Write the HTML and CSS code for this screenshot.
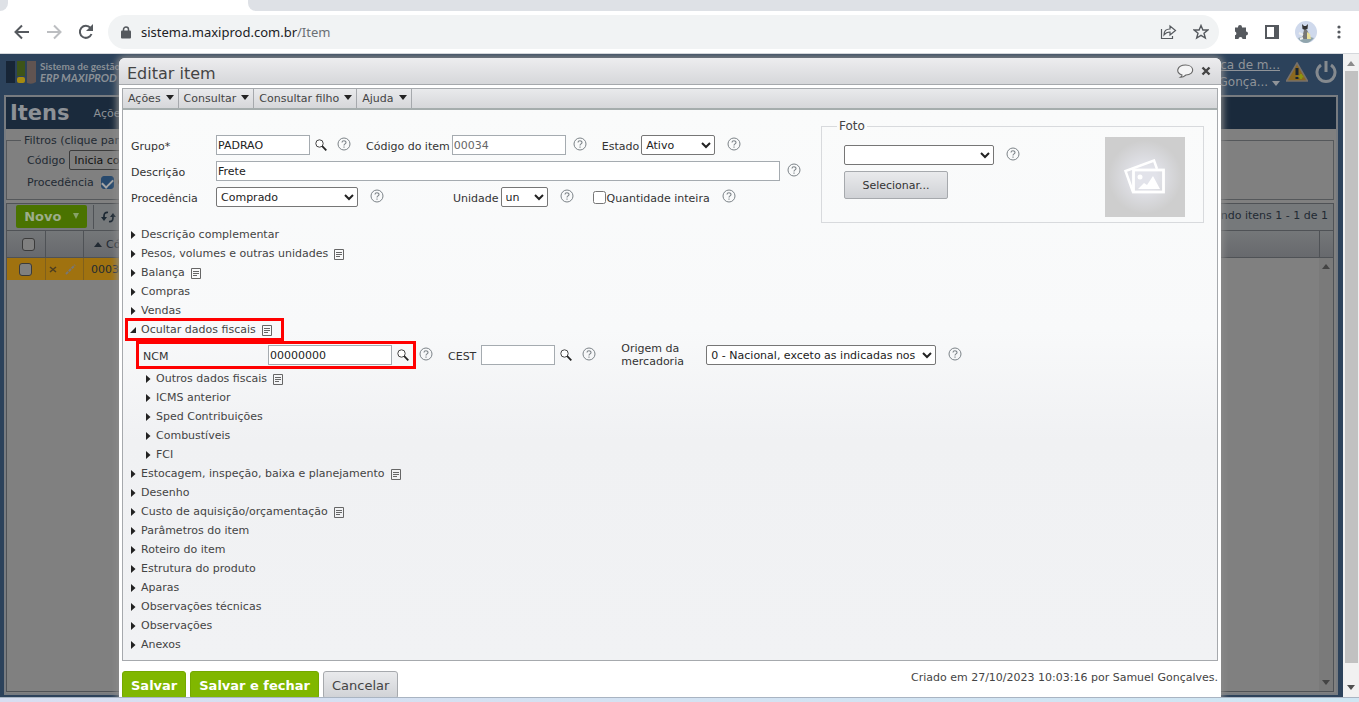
FILE: index.html
```html
<!DOCTYPE html>
<html lang="pt-br">

<head>
  <meta charset="UTF-8" />
  <meta name="viewport" content="width=device-width, initial-scale=1.0" />
  <title>Itens - ERP MAXIPROD</title>
  <link rel="stylesheet" href="styles.css">
</head>

<body>

  <!-- Ícones reutilizados -->
  <svg class="sprite" aria-hidden="true">
    <symbol id="i-help" viewBox="0 0 14 14">
      <circle cx="7" cy="7" r="6" fill="none" stroke="#7c8388" />
      <path d="M5 5.6C5 3.200 9 3.200 9 5.500C9 6.900 7 6.900 7 8.400M7 9.600V10.700" fill="none" stroke="#7c8388" stroke-width="1.100" />
    </symbol>
    <symbol id="i-search" viewBox="0 0 12 12">
      <circle cx="4.500" cy="4.500" r="3.700" fill="#fff" stroke="#444" />
      <path d="M7.200 7.200L11.300 11.300" stroke="#222" stroke-width="1.800" />
    </symbol>
    <symbol id="i-note" viewBox="0 0 10 11">
      <path d="M1 .5H9.500V10.500H.5V.5H1M2 3.500H8M2 5.500H8M2 7.500H6" fill="none" stroke="#666" />
    </symbol>
    <symbol id="i-right" viewBox="0 0 5 8">
      <path d="M0 0L4.500 4L0 8Z" fill="#222" />
    </symbol>
    <symbol id="i-open" viewBox="0 0 6 6">
      <path d="M6 0V6H0Z" fill="#222" />
    </symbol>
    <symbol id="i-down" viewBox="0 0 8 5">
      <path d="M0 0H8L4 5Z" fill="currentColor" />
    </symbol>
    <symbol id="i-up" viewBox="0 0 8 5">
      <path d="M0 5H8L4 0Z" fill="currentColor" />
    </symbol>
  </svg>

  <!-- Navegador -->
  <div class="tabs">
    <div class="tab-prev"></div>
    <div class="tab-active"></div>
    <div class="tab-next"></div>
  </div>
  <div class="browser-bar">
    <button class="nav" aria-label="Voltar">
      <svg width="16" height="16" viewBox="0 0 16 16"><path d="M15 8H2M8 1.500L1.500 8L8 14.500" fill="none" stroke="#55595e" stroke-width="2" /></svg>
    </button>
    <button class="nav" aria-label="Avançar">
      <svg width="16" height="16" viewBox="0 0 16 16"><path d="M1 8H14M8 1.500L14.500 8L8 14.500" fill="none" stroke="#bcbec1" stroke-width="2" /></svg>
    </button>
    <button class="nav" aria-label="Recarregar">
      <svg width="16" height="16" viewBox="0 0 16 16"><path d="M13.500 10A6 6 0 1 1 12.500 4" fill="none" stroke="#55595e" stroke-width="2" /><path d="M15 0V7H8Z" fill="#55595e" /></svg>
    </button>
    <div class="address">
      <svg width="10" height="13" viewBox="0 0 10 13"><path d="M2.500 5V3.500A2.500 2.500 0 0 1 7.500 3.500V5" fill="none" stroke="#55595e" stroke-width="1.500" /><rect x="0" y="4.500" width="10" height="8" rx="1" fill="#55595e" /></svg>
      <span class="url">sistema.maxiprod.com.br<span class="path">/Item</span></span>
      <svg width="17" height="16" viewBox="0 0 17 16"><path d="M1.500 5V14.500H12.500V12M4 11C4 7 6 5 10 5V2L15.500 6.500L10 11V8C7 8 5.500 9 4 11Z" fill="none" stroke="#55595e" stroke-width="1.200" /></svg>
      <svg width="16" height="16" viewBox="0 0 16 16"><path d="M8 1.500L9.900 6H14.800L11 9.200L12.300 14L8 11.300L3.700 14L5 9.200L1.200 6H6.100Z" fill="none" stroke="#55595e" stroke-width="1.400" /></svg>
    </div>
    <div class="extensions">
      <svg width="16" height="16" viewBox="0 0 16 16"><path d="M2 3.500H5V3A2 2 0 0 1 9 3V3.500H13V7.500A2 2 0 0 1 13 11.500V15H9.500A2 2 0 0 0 5.500 15H2V11.300A2 2 0 0 0 2 7.500Z" fill="#55595e" /></svg>
      <svg width="14" height="14" viewBox="0 0 14 14"><path d="M1 1H13V13H1Z" fill="none" stroke="#55595e" stroke-width="2" /><path d="M9 1H13V13H9Z" fill="#55595e" /></svg>
      <svg width="22" height="22" viewBox="0 0 22 22"><circle cx="11" cy="11" r="11" fill="#cfd9ec" /><path d="M3 17Q11 14 19 17Q15 22 11 22Q6 22 3 17Z" fill="#90a5ad" /><path d="M7 3L9 5H11L13 3L12.500 8L10 9L7.500 8Z" fill="#333" /><path d="M9 9H12L14 13L13 18H7L8 13Z" fill="#777" /><path d="M12 11L15 13L16 18H12Z" fill="#eadf99" /><path d="M8 14L4 12M8 17L5 18" stroke="#eee" stroke-width="2" /></svg>
      <svg width="4" height="16" viewBox="0 0 4 16"><circle cx="2" cy="3" r="1.600" fill="#55595e" /><circle cx="2" cy="8" r="1.600" fill="#55595e" /><circle cx="2" cy="13" r="1.600" fill="#55595e" /></svg>
    </div>
  </div>

  <div class="viewport">
    <div class="page">

      <!-- Tela de itens, atrás do diálogo -->
      <header class="app-header">
        <svg width="30" height="24" viewBox="0 0 30 24"><rect width="9" height="22" y="1" fill="#172536" /><rect x="11" y="1" width="8" height="15" fill="#3d5418" /><rect x="11" y="17" width="8" height="6" rx="2" fill="#a58a10" /><path d="M21 1H30V22Q26 25 21 23Z" fill="#615451" /></svg>
        <div class="brand">
          <span>Sistema de gestão</span>
          <em>ERP MAXIPROD</em>
        </div>
        <div class="account">
          <a href="#">Fábrica de m...</a>
          <span>Samuel Gonça... <svg width="8" height="5"><use href="#i-down" /></svg></span>
        </div>
        <svg width="22" height="20" viewBox="0 0 22 20"><path d="M11 1L21.500 19H.5Z" fill="#8b681f" stroke="#77706b" stroke-width="1.500" /><path d="M11 6V13M11 15V17" stroke="#192431" stroke-width="3" /><path d="M15 12V17M12.500 14.500H17.500" stroke="#8b9410" stroke-width="2" /></svg>
        <svg width="22" height="24" viewBox="0 0 22 24"><path d="M6 5A9 9 0 1 0 16 5M11 1V12" fill="none" stroke="#858a8f" stroke-width="3" /></svg>
      </header>

      <main class="frame">
        <div class="title-bar">
          <h1>Itens</h1>
          <span>Ações</span>
        </div>
        <fieldset class="filters">
          <legend>Filtros (clique para)</legend>
          <div class="filter-row">
            <label for="f-codigo">Código</label>
            <select id="f-codigo"><option>Inicia com</option></select>
          </div>
          <div class="filter-row">
            <span>Procedência</span>
            <input type="checkbox" class="dim-check on" id="f-comprado" checked>
            <label for="f-comprado">C</label>
          </div>
        </fieldset>
        <section class="list">
          <div class="list-bar">
            <button class="novo">Novo <svg width="6" height="6" viewBox="0 0 8 5" preserveAspectRatio="none"><path d="M0 0H8L4 5Z" fill="#87a267" /></svg></button>
            <span class="list-tools">
              <svg width="15" height="12" viewBox="0 0 15 12"><path d="M7 1.500Q3 1 3 5V7M8 10.500Q12 11 12 7V5" fill="none" stroke="#1c2833" stroke-width="1.700" /><path d="M0 6H6L3 10ZM9 6H15L12 2Z" fill="#1c2833" /></svg>
            </span>
            <span class="count">Exibindo itens 1 - 1 de 1</span>
          </div>
          <div class="list-head">
            <span class="c-check"><input type="checkbox" class="dim-check" aria-label="Selecionar todos"></span>
            <span class="c-tools"></span>
            <span class="c-code"><svg width="8" height="5"><use href="#i-up" /></svg> Código</span>
            <span class="c-end"></span>
          </div>
          <div class="list-body">
            <div class="list-row">
              <span class="c-check"><input type="checkbox" class="dim-check" aria-label="Selecionar 00034"></span>
              <span class="c-tools">
                <svg width="8" height="8" viewBox="0 0 8 8"><path d="M1 2L7 7M1 7L7 2" stroke="#4d3e20" stroke-width="1.500" /></svg>
                <svg width="11" height="11" viewBox="0 0 11 11"><path d="M1 10L10 1" stroke="#777" stroke-width="2" stroke-dasharray="3 1" /></svg>
              </span>
              <span class="c-code">00034</span>
            </div>
            <div class="list-scroll">
              <svg width="8" height="5"><use href="#i-up" /></svg>
              <svg width="8" height="5"><use href="#i-down" /></svg>
            </div>
          </div>
        </section>
      </main>

      <!-- Diálogo de edição -->
      <div class="dialog" role="dialog" aria-labelledby="dialog-title">
        <div class="dialog-head">
          <h2 id="dialog-title">Editar item</h2>
          <button class="icon-btn" aria-label="Comentários">
            <svg width="17" height="14" viewBox="0 0 17 14"><path d="M5 11C-2 9 0 1 8.500 1C18 1 18 11 9 11Q6 13.500 3.500 13.300Q5 12.500 5 11Z" fill="#f4f4f5" stroke="#666" stroke-width="1.100" /></svg>
          </button>
          <button class="icon-btn" aria-label="Fechar">
            <svg width="10" height="10" viewBox="0 0 10 10"><path d="M1.500 1.500L8.500 8.500M8.500 1.500L1.500 8.500" stroke="#444" stroke-width="2.400" /></svg>
          </button>
        </div>

        <nav class="menu">
          <button>Ações <svg width="8" height="5"><use href="#i-down" /></svg></button>
          <button>Consultar <svg width="8" height="5"><use href="#i-down" /></svg></button>
          <button>Consultar filho <svg width="8" height="5"><use href="#i-down" /></svg></button>
          <button>Ajuda <svg width="8" height="5"><use href="#i-down" /></svg></button>
        </nav>

        <div class="panel">
          <div class="top">
            <div class="fields">
              <div class="row">
                <label class="first" for="grupo">Grupo*</label>
                <input type="text" id="grupo" class="w-grupo" value="PADRAO">
                <svg class="search"><use href="#i-search" /></svg>
                <svg class="help"><use href="#i-help" /></svg>
                <label for="codigo">Código do item</label>
                <input type="text" id="codigo" class="w-codigo" value="00034">
                <svg class="help after-input"><use href="#i-help" /></svg>
                <label for="estado">Estado</label>
                <select id="estado" class="w-estado"><option>Ativo</option></select>
                <svg class="help"><use href="#i-help" /></svg>
              </div>
              <div class="row">
                <label class="first" for="descricao">Descrição</label>
                <input type="text" id="descricao" class="w-descricao" value="Frete">
                <svg class="help after-input"><use href="#i-help" /></svg>
              </div>
              <div class="row">
                <label class="first" for="procedencia">Procedência</label>
                <select id="procedencia" class="w-procedencia"><option>Comprado</option></select>
                <svg class="help"><use href="#i-help" /></svg>
                <label class="unidade" for="unidade">Unidade</label>
                <select id="unidade" class="w-unidade"><option>un</option></select>
                <svg class="help"><use href="#i-help" /></svg>
                <input type="checkbox" id="inteira">
                <label class="check-label" for="inteira">Quantidade inteira</label>
                <svg class="help"><use href="#i-help" /></svg>
              </div>
            </div>

            <fieldset class="foto">
              <legend>Foto</legend>
              <div class="foto-body">
                <div class="foto-form">
                  <div class="foto-line">
                    <select class="w-foto" aria-label="Foto"><option></option></select>
                    <svg class="help"><use href="#i-help" /></svg>
                  </div>
                  <button class="btn-grey">Selecionar...</button>
                </div>
                <div class="thumb">
                  <svg width="42" height="36" viewBox="0 0 42 36"><path d="M9 33L1.500 12L30 1.500L33 10" fill="none" stroke="#fff" stroke-width="2.500" /><rect x="9.500" y="11" width="30" height="22" fill="none" stroke="#fff" stroke-width="2.800" /><circle cx="16" cy="18" r="2.500" fill="#fff" /><path d="M14 30L20 24L23 26L29 17L36 30Z" fill="#fff" /></svg>
                </div>
              </div>
            </fieldset>
          </div>

          <ul class="tree">
            <li><a href="#"><svg class="arrow"><use href="#i-right" /></svg>Descrição complementar</a></li>
            <li><a href="#"><svg class="arrow"><use href="#i-right" /></svg>Pesos, volumes e outras unidades<svg class="note"><use href="#i-note" /></svg></a></li>
            <li><a href="#"><svg class="arrow"><use href="#i-right" /></svg>Balança<svg class="note"><use href="#i-note" /></svg></a></li>
            <li><a href="#"><svg class="arrow"><use href="#i-right" /></svg>Compras</a></li>
            <li><a href="#"><svg class="arrow"><use href="#i-right" /></svg>Vendas</a></li>
            <li>
              <a href="#" class="marked"><svg class="arrow open"><use href="#i-open" /></svg>Ocultar dados fiscais<svg class="note"><use href="#i-note" /></svg></a>
              <div class="fiscal">
                <div class="ncm">
                  <label for="ncm">NCM</label>
                  <input type="text" id="ncm" class="w-ncm" value="00000000">
                  <svg class="search"><use href="#i-search" /></svg>
                </div>
                <svg class="help"><use href="#i-help" /></svg>
                <label for="cest">CEST</label>
                <input type="text" id="cest" class="w-cest">
                <svg class="search"><use href="#i-search" /></svg>
                <svg class="help"><use href="#i-help" /></svg>
                <label class="origem" for="origem">Origem da mercadoria</label>
                <select id="origem" class="w-origem"><option>0 - Nacional, exceto as indicadas nos códigos 3, 4, 5 e 8</option></select>
                <svg class="help"><use href="#i-help" /></svg>
              </div>
              <ul class="sub">
                <li><a href="#"><svg class="arrow"><use href="#i-right" /></svg>Outros dados fiscais<svg class="note"><use href="#i-note" /></svg></a></li>
                <li><a href="#"><svg class="arrow"><use href="#i-right" /></svg>ICMS anterior</a></li>
                <li><a href="#"><svg class="arrow"><use href="#i-right" /></svg>Sped Contribuições</a></li>
                <li><a href="#"><svg class="arrow"><use href="#i-right" /></svg>Combustíveis</a></li>
                <li><a href="#"><svg class="arrow"><use href="#i-right" /></svg>FCI</a></li>
              </ul>
            </li>
            <li><a href="#"><svg class="arrow"><use href="#i-right" /></svg>Estocagem, inspeção, baixa e planejamento<svg class="note"><use href="#i-note" /></svg></a></li>
            <li><a href="#"><svg class="arrow"><use href="#i-right" /></svg>Desenho</a></li>
            <li><a href="#"><svg class="arrow"><use href="#i-right" /></svg>Custo de aquisição/orçamentação<svg class="note"><use href="#i-note" /></svg></a></li>
            <li><a href="#"><svg class="arrow"><use href="#i-right" /></svg>Parâmetros do item</a></li>
            <li><a href="#"><svg class="arrow"><use href="#i-right" /></svg>Roteiro do item</a></li>
            <li><a href="#"><svg class="arrow"><use href="#i-right" /></svg>Estrutura do produto</a></li>
            <li><a href="#"><svg class="arrow"><use href="#i-right" /></svg>Aparas</a></li>
            <li><a href="#"><svg class="arrow"><use href="#i-right" /></svg>Observações técnicas</a></li>
            <li><a href="#"><svg class="arrow"><use href="#i-right" /></svg>Observações</a></li>
            <li><a href="#"><svg class="arrow"><use href="#i-right" /></svg>Anexos</a></li>
          </ul>
        </div>

        <div class="dialog-foot">
          <button class="save">Salvar</button>
          <button class="save">Salvar e fechar</button>
          <button class="cancel">Cancelar</button>
          <span class="created">Criado em 27/10/2023 10:03:16 por Samuel Gonçalves.</span>
        </div>
      </div>
    </div>

    <div class="scrollbar">
      <svg width="8" height="5"><use href="#i-up" /></svg>
      <div class="scroll-thumb"></div>
      <svg class="dark" width="8" height="5"><use href="#i-down" /></svg>
    </div>
  </div>

  <div class="taskbar"></div>

</body>

</html>
```
FILE: styles.css
```css
* {
  box-sizing: border-box;
}

body {
  margin: 0;
  height: 100vh;
  display: flex;
  flex-direction: column;
  overflow: hidden;
  background: #fff;
  color: #444;
  font-family: Verdana, "DejaVu Sans", sans-serif;
  font-size: 11px;
}

button,
input,
select {
  font: inherit;
  margin: 0;
}

svg {
  flex: none;
}

.sprite {
  position: absolute;
  width: 0;
  height: 0;
}

/* Navegador */
.tabs {
  display: flex;
  height: 11px;
  background: #fff;
}

.tab-prev {
  width: 8px;
  background: #dee1e6;
  border-bottom-right-radius: 8px;
}

.tab-active {
  width: 240px;
}

.tab-next {
  flex: 1;
  background: #dee1e6;
  border-bottom-left-radius: 8px;
}

.browser-bar {
  display: flex;
  align-items: center;
  height: 43px;
  padding: 0 18px 0 14px;
  border-bottom: 1px solid #d5d8dc;
}

.nav {
  display: flex;
  width: 16px;
  margin-right: 16px;
  padding: 0;
  border: 0;
  background: none;
}

.address {
  flex: 1;
  display: flex;
  align-items: center;
  gap: 16px;
  height: 34px;
  margin-left: -2px;
  padding: 0 10px 0 13px;
  border-radius: 17px;
  background: #f1f3f4;
}

.url {
  flex: 1;
  margin-left: -6px;
  color: #202124;
  font-family: "Segoe UI", "Noto Sans", sans-serif;
  font-size: 13px;
}

.path {
  color: #6b7075;
}

.extensions {
  display: flex;
  align-items: center;
  gap: 16px;
  margin-left: 14px;
}

.extensions svg:last-child {
  margin-left: 4px;
}

/* Página */
.viewport {
  flex: 1;
  display: flex;
  min-height: 0;
}

.page {
  flex: 1;
  position: relative;
  display: flex;
  flex-direction: column;
  min-width: 0;
  padding: 0 5px 2px 4px;
  overflow: hidden;
  background: #2c425b;
}

.scrollbar {
  display: flex;
  flex-direction: column;
  align-items: center;
  width: 16px;
  padding: 7px 0;
  background: #f1f1f1;
  color: #8b8b8b;
}

.scroll-thumb {
  flex: 1;
  width: 13px;
  margin: 5px 0 22px;
  background: #c1c1c1;
}

.scrollbar .dark {
  color: #505050;
}

.taskbar {
  height: 5px;
  border-top: 1px solid #a9b4c2;
  background: linear-gradient(to right, #d8def1, #cfe6f3);
}

/* Cabeçalho do sistema */
.app-header {
  display: flex;
  align-items: center;
  gap: 4px;
  height: 41px;
  padding: 0 1px 5px 2px;
  color: #909499;
}

.brand {
  flex: 1;
  display: flex;
  flex-direction: column;
  font-family: Lato, sans-serif;
  font-size: 10px;
  font-weight: bold;
  line-height: 12px;
  color: #8a9096;
}

.brand em {
  font-size: 11px;
}

.account {
  display: flex;
  flex-direction: column;
  align-items: flex-end;
  padding-top: 4px;
  margin-right: 2px;
  font-size: 12px;
  line-height: 17px;
}

.account a {
  color: inherit;
}

.app-header > svg:last-child {
  margin-left: 3px;
}

/* Tela de itens */
.frame {
  flex: 1;
  display: flex;
  flex-direction: column;
  border: 2px solid #777b80;
  background: #808080;
  color: #222a33;
}

.title-bar {
  display: flex;
  align-items: center;
  gap: 24px;
  height: 32px;
  padding-left: 4px;
  background: #1a2a3c;
  color: #8d9196;
}

.title-bar h1 {
  margin: 0;
  font-size: 21px;
}

.filters {
  height: 66px;
  margin: 5px 2px 0 0;
  padding: 2px 20px;
  border: 1px solid #55585b;
}

.filters legend {
  margin-left: -6px;
  padding: 0 3px;
}

.filter-row {
  display: flex;
  align-items: center;
  gap: 4px;
  height: 22px;
}

.filter-row select {
  height: 20px;
  padding: 0;
  border: 1px solid #3b3b3b;
  border-radius: 2px;
  background: #808080;
  color: #111;
}

.dim-check {
  appearance: none;
  width: 13px;
  height: 13px;
  border: 1px solid #3b3b3b;
  border-radius: 3px;
  background: #808080;
}

.filter-row .dim-check {
  margin-left: 3px;
}

.dim-check.on {
  display: flex;
  justify-content: center;
  border-color: #27496d;
  background: #27496d;
}

.dim-check.on::after {
  content: "";
  width: 5px;
  height: 9px;
  border: solid #a5a5a5;
  border-width: 0 2px 2px 0;
  transform: rotate(45deg);
}

.list {
  flex: 1;
  display: flex;
  flex-direction: column;
  margin: 3px 2px 1px 0;
  border: 1px solid #4f5256;
}

.list-bar {
  display: flex;
  align-items: flex-start;
  height: 27px;
  padding: 1px 5px 0 9px;
  border-bottom: 1px solid #4f5256;
  background: #76797b;
}

.novo {
  width: 71px;
  height: 23px;
  padding: 0;
  border: 0;
  border-radius: 2px;
  background: #4a7300;
  color: #9dad8b;
  font-size: 13px;
  font-weight: bold;
}

.novo svg {
  margin: 0 0 2px 7px;
}

.list-tools {
  display: flex;
  align-items: center;
  height: 24px;
  margin-left: 6px;
  padding-left: 7px;
  border-left: 1px solid #4f5256;
}

.count {
  margin-left: auto;
  line-height: 22px;
}

.list-head,
.list-row {
  display: flex;
}

.list-head {
  height: 27px;
  border-bottom: 1px solid #4f5256;
  background: linear-gradient(#747779, #67696d);
}

.list-head > span,
.list-row > span {
  display: flex;
  align-items: center;
}

.c-check {
  width: 39px;
  padding-left: 12px;
  border-right: 1px solid #4f5256;
}

.list-head .c-check {
  padding-left: 15px;
}

.c-tools {
  gap: 8px;
  width: 38px;
  padding-left: 3px;
  border-right: 1px solid #4f5256;
}

.c-code {
  flex: 1;
  gap: 4px;
  padding-left: 7px;
}

.list-head .c-code {
  padding-left: 10px;
}

.c-end {
  width: 14px;
  border-left: 1px solid #4f5256;
}

.list-body {
  flex: 1;
  display: flex;
  align-items: flex-start;
  justify-content: space-between;
}

.list-row {
  width: 60%;
  height: 22px;
  background: #a0720f;
}

.list-row > span {
  border-color: #80601b;
}

.list-scroll {
  align-self: stretch;
  display: flex;
  flex-direction: column;
  justify-content: space-between;
  align-items: center;
  width: 14px;
  padding: 6px 0;
  background: #7a7a7a;
  color: #444;
}

/* Diálogo */
.dialog {
  position: absolute;
  top: 4px;
  left: 119px;
  right: 122px;
  border-radius: 6px 6px 0 0;
  background: #fff;
  box-shadow: 0 0 7px 2px #8b8b8b;
}

.dialog-head {
  display: flex;
  align-items: center;
  gap: 1px;
  height: 27px;
  padding: 0 7px 0 8px;
  border-bottom: 1px solid #a6a9ad;
  border-radius: 6px 6px 0 0;
  background: linear-gradient(#ededef, #d6d7da);
}

.dialog-head h2 {
  flex: 1;
  margin: 0;
  padding-top: 4px;
  font-size: 16px;
  font-weight: normal;
}

.icon-btn {
  display: flex;
  padding: 0 3px;
  border: 0;
  background: none;
}

.menu {
  display: flex;
  height: 22px;
  margin: 3px 3px 0;
  border: 1px solid #a6a9ad;
  border-bottom: 2px solid #a5adad;
  background: linear-gradient(#e9eaec, #d6d7da);
}

.menu button {
  display: flex;
  align-items: center;
  gap: 5px;
  padding: 0 4px 0 5px;
  border: 0;
  border-right: 1px solid #a6a9ad;
  background: none;
  color: #444;
}

.menu svg {
  margin-bottom: 3px;
  color: #222;
}

.panel {
  margin: 0 3px;
  padding: 14px 13px 6px 8px;
  border: 1px solid #a6a9ad;
  border-top: 0;
  background: linear-gradient(#fafbfb, #f8f9fa 40%, #f0f1f3 60%, #f1f2f4);
}

.top {
  display: flex;
  justify-content: space-between;
  align-items: flex-start;
}

.fields {
  display: grid;
  gap: 6px;
  padding-top: 11px;
}

.row {
  display: flex;
  align-items: center;
  height: 20px;
}

.row label {
  padding: 3px 2px 0 0;
  color: #333;
}

.row .first {
  width: 85px;
}

input[type="text"] {
  height: 20px;
  padding: 0 1px;
  border: 1px solid #a5abb0;
  background: #fff;
  color: #222;
}

.panel select {
  height: 20px;
  padding: 0;
  border: 1px solid #767676;
  border-radius: 2px;
  background-color: #fff;
  color: #222;
}

#inteira {
  width: 13px;
  height: 13px;
  margin-left: 4px;
}

.row #codigo {
  color: #666;
}

.row .check-label {
  padding: 2px 0 0 1px;
}

.search {
  width: 12px;
  height: 12px;
  margin-left: 5px;
}

.help {
  width: 14px;
  height: 14px;
  margin: 0 15px 3px 12px;
}

.search + .help {
  margin-left: 10px;
}

.after-input {
  margin-left: 7px;
}

.row .unidade {
  margin-left: 54px;
}

.w-grupo {
  width: 94px;
}

.w-codigo {
  width: 114px;
}

.w-estado {
  width: 74px;
}

.w-descricao {
  width: 564px;
}

.w-procedencia {
  width: 142px;
}

.w-unidade {
  width: 47px;
}

.w-foto {
  width: 150px;
}

.w-ncm {
  width: 124px;
}

.w-cest {
  width: 74px;
}

.w-origem {
  width: 230px;
}

/* Foto */
.foto {
  width: 383px;
  height: 104px;
  margin: 0;
  margin-top: -5px;
  padding: 0 18px 0 22px;
  border: 1px solid #d8dadd;
}

.foto legend {
  margin-left: -7px;
  padding: 0 2px;
  font-size: 12px;
}

.foto-body {
  display: flex;
  justify-content: space-between;
}

.foto-form {
  padding-top: 12px;
}

.foto-line {
  display: flex;
  align-items: center;
  margin-bottom: 6px;
}

.btn-grey {
  width: 104px;
  height: 28px;
  border: 1px solid #a6a9ad;
  border-radius: 2px;
  background: linear-gradient(#e9eaec, #d0d2d6);
  color: #333;
}

.thumb {
  display: flex;
  align-items: center;
  justify-content: center;
  width: 80px;
  height: 80px;
  margin-top: 4px;
  background: radial-gradient(#e2e3ea 20%, #cecece 65%);
}

/* Árvore de seções */
.tree,
.sub {
  margin: 0;
  padding: 0;
  list-style: none;
}

.tree {
  margin-top: 2px;
}

.sub {
  padding-left: 15px;
}

.tree a {
  display: flex;
  align-items: center;
  width: fit-content;
  height: 19px;
  color: #444;
  text-decoration: none;
}

.arrow {
  width: 5px;
  height: 8px;
  margin-right: 5px;
}

.arrow.open {
  width: 6px;
  height: 6px;
  margin: 0 5px 0 -1px;
}

.note {
  width: 10px;
  height: 11px;
  margin: 2px 0 0 6px;
}

.tree .marked {
  margin-left: -4px;
  padding: 0 10px 0 4px;
  outline: 3px solid #f00;
  outline-offset: -1px;
}

.fiscal {
  display: flex;
  align-items: center;
  height: 30px;
  margin-left: 5px;
  padding-top: 2px;
}

.fiscal label {
  padding: 2px 5px 0 0;
  color: #333;
}

.ncm {
  display: flex;
  align-items: center;
  height: 28px;
  padding: 0 4px;
  border: 3px solid #f00;
}

.ncm label {
  width: 125px;
}

.fiscal .ncm + .help {
  margin-left: 3px;
}

.fiscal .origem {
  width: 85px;
  margin-left: 10px;
  padding: 0 20px 0 0;
  line-height: 13px;
}

/* Rodapé */
.dialog-foot {
  display: flex;
  gap: 4px;
  margin: 10px 3px 0;
}

.dialog-foot button {
  height: 28px;
  padding: 0 8px;
  border: 1px solid #74a800;
  border-radius: 3px;
  background: #80b700;
  color: #fff;
  font-size: 13px;
  font-weight: bold;
}

.dialog-foot .cancel {
  border-color: #a6a9ad;
  background: linear-gradient(#e9eaec, #d0d2d6);
  color: #444;
  font-weight: normal;
}

.created {
  margin-left: auto;
}
```
